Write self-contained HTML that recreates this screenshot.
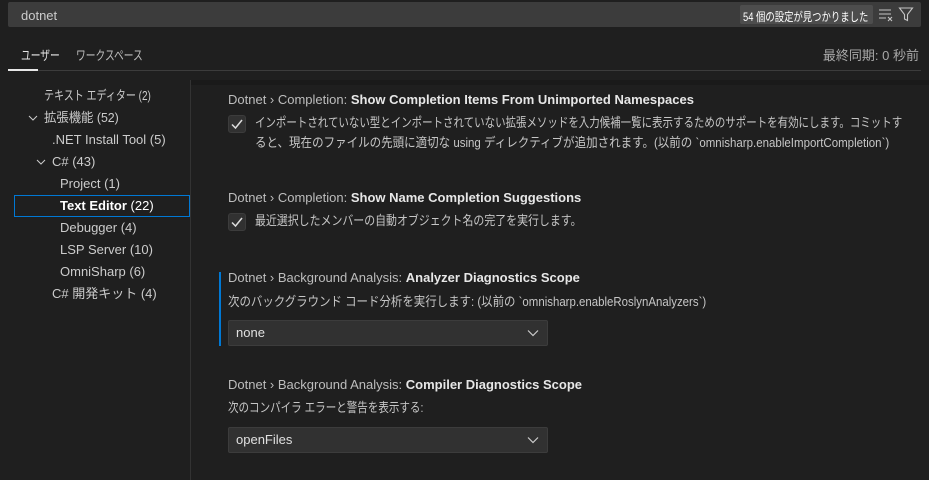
<!DOCTYPE html>
<html><head><meta charset="utf-8"><style>
*{box-sizing:border-box;margin:0;padding:0}
body{width:929px;height:476px;background:#1f1f1f;font-family:"Liberation Sans","Noto Sans CJK JP",sans-serif;font-size:13px;color:#cccccc;position:relative;overflow:hidden}
.a{position:absolute;white-space:nowrap}
.sx{transform-origin:0 0}
.search{left:8px;top:2px;width:913px;height:25px;background:#3c3c3c;border-radius:2px}
.badge{left:740px;top:5px;height:19px;width:133px;background:#4d4d4d;border-radius:2px}
.t{font-size:13px;line-height:22px}
.sel{left:14px;top:195px;width:176px;height:22px;border:1px solid #0078d4}
.ttl{color:#bdbdbd;font-size:13px}
.ttl b{color:#e7e7e7}
.cb{width:18px;height:18px;background:#313131;border:1px solid #3c3c3c;border-radius:3px}
.desc{color:#c6c6c6;font-size:13px;line-height:20px}
.sel2{left:228px;width:320px;height:26px;background:#313131;border:1px solid #3c3c3c;border-radius:2px;padding-left:7px;line-height:24px;color:#e0e0e0}
</style></head><body>
<div class="a search"></div>
<div class="a" style="left:21px;top:8px;color:#cccccc">dotnet</div>
<div class="a badge"></div>
<div class="a sx" style="left:743px;top:8px;color:#fff;font-size:12px;transform:scaleX(.78)">54 個の設定が見つかりました</div>
<svg class="a" style="left:878px;top:8px" width="16" height="14"><path d="M1 2h12M1 6h12M1 10h7M10 9l4 4M14 9l-4 4" stroke="#c5c5c5" stroke-width="1.1" fill="none"/></svg>
<svg class="a" style="left:898px;top:6px" width="16" height="17"><path d="M1.5 2h13l-5 6.5v6l-3-1.5v-4.5z" stroke="#c5c5c5" stroke-width="1.1" fill="none"/></svg>
<div class="a sx" style="left:21px;top:45px;color:#e7e7e7;transform:scaleX(.75)">ユーザー</div>
<div class="a sx" style="left:76px;top:45px;color:#bdbdbd;transform:scaleX(.75)">ワークスペース</div>
<div class="a" style="right:10px;top:45px;color:#a8a8a8">最終同期: 0 秒前</div>
<div class="a" style="left:8px;top:70px;width:913px;height:1px;background:#3c3c3c"></div>
<div class="a" style="left:8px;top:69px;width:30px;height:2px;background:#e7e7e7"></div>
<div class="a" style="left:190px;top:80px;width:1px;height:400px;background:#333"></div>
<div class="a" style="left:191px;top:80px;width:738px;height:5px;background:#1a1a1a"></div>
<div class="a sel"></div>
<div class="a t sx" style="left:44px;top:85px;transform:scaleX(.77)">テキスト エディター (2)</div>
<svg class="a" style="left:28px;top:113px" width="10" height="10"><path d="M1 3l4 4 4-4" stroke="#ccc" fill="none"/></svg>
<div class="a t sx" style="left:44px;top:107px;transform:scaleX(.95)">拡張機能 (52)</div>
<div class="a t" style="left:52px;top:129px">.NET Install Tool (5)</div>
<svg class="a" style="left:36px;top:157px" width="10" height="10"><path d="M1 3l4 4 4-4" stroke="#ccc" fill="none"/></svg>
<div class="a t" style="left:52px;top:151px">C# (43)</div>
<div class="a t" style="left:60px;top:173px">Project (1)</div>
<div class="a t" style="left:60px;top:195px;color:#fff"><b>Text Editor</b> (22)</div>
<div class="a t" style="left:60px;top:217px">Debugger (4)</div>
<div class="a t" style="left:60px;top:239px">LSP Server (10)</div>
<div class="a t" style="left:60px;top:261px">OmniSharp (6)</div>
<div class="a t" style="left:52px;top:283px">C# 開発キット (4)</div>

<div class="a ttl" style="left:228px;top:92px">Dotnet › Completion: <b>Show Completion Items From Unimported Namespaces</b></div>
<div class="a cb" style="left:228px;top:115px"></div>
<svg class="a" style="left:230px;top:117px" width="14" height="14"><path d="M2 7.5l3.5 3.5L12 3" stroke="#ddd" stroke-width="1.5" fill="none"/></svg>
<div class="a desc sx" style="left:255px;top:113px;transform:scaleX(.805)">インポートされていない型とインポートされていない拡張メソッドを入力候補一覧に表示するためのサポートを有効にします。コミットす</div>
<div class="a desc sx" style="left:255px;top:133px;transform:scaleX(.885)">ると、現在のファイルの先頭に適切な using ディレクティブが追加されます。(以前の `omnisharp.enableImportCompletion`)</div>

<div class="a ttl" style="left:228px;top:190px">Dotnet › Completion: <b>Show Name Completion Suggestions</b></div>
<div class="a cb" style="left:228px;top:213px"></div>
<svg class="a" style="left:230px;top:215px" width="14" height="14"><path d="M2 7.5l3.5 3.5L12 3" stroke="#ddd" stroke-width="1.5" fill="none"/></svg>
<div class="a desc sx" style="left:255px;top:211px;transform:scaleX(.84)">最近選択したメンバーの自動オブジェクト名の完了を実行します。</div>

<div class="a" style="left:219px;top:272px;width:2px;height:74px;background:#0078d4"></div>
<div class="a ttl" style="left:228px;top:270px">Dotnet › Background Analysis: <b>Analyzer Diagnostics Scope</b></div>
<div class="a desc sx" style="left:228px;top:292px;transform:scaleX(.88)">次のバックグラウンド コード分析を実行します: (以前の `omnisharp.enableRoslynAnalyzers`)</div>
<div class="a sel2" style="top:320px">none</div>
<svg class="a" style="left:527px;top:328px" width="12" height="10"><path d="M1 2.5l5 5 5-5" stroke="#ccc" stroke-width="1.2" fill="none"/></svg>

<div class="a ttl" style="left:228px;top:377px">Dotnet › Background Analysis: <b>Compiler Diagnostics Scope</b></div>
<div class="a desc sx" style="left:228px;top:398px;transform:scaleX(.81)">次のコンパイラ エラーと警告を表示する:</div>
<div class="a sel2" style="top:427px">openFiles</div>
<svg class="a" style="left:527px;top:435px" width="12" height="10"><path d="M1 2.5l5 5 5-5" stroke="#ccc" stroke-width="1.2" fill="none"/></svg>
</body></html>
